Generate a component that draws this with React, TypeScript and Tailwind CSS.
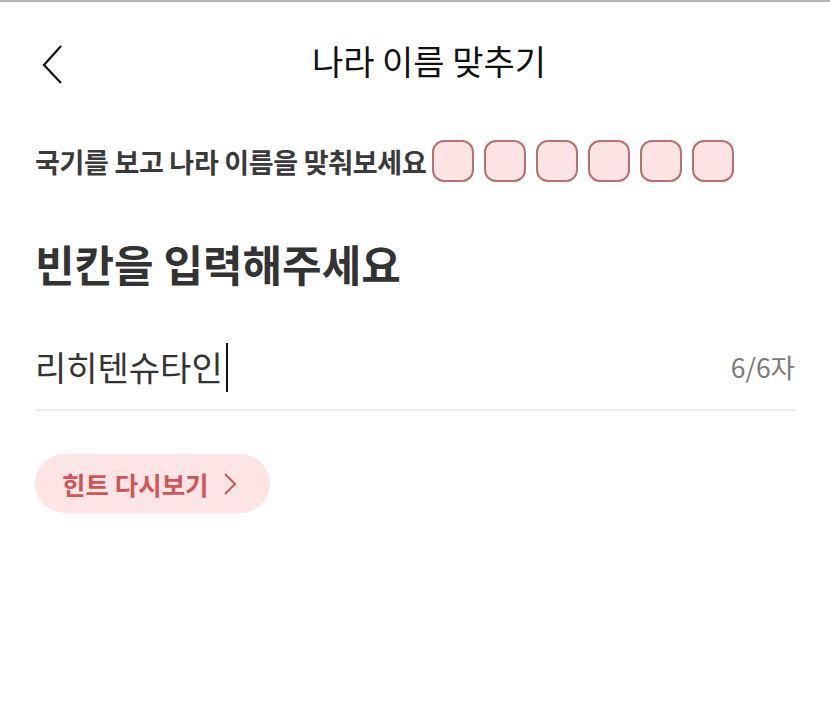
import React from "react";

export default function App() {
  const font = { fontFamily: '"Noto Sans CJK KR", "Noto Sans", sans-serif' };
  return (
    <div className="w-[830px] h-[715px] bg-white border-t-2 border-[#b5b5b5] overflow-hidden" style={font}>
      <div className="relative h-[118px] flex items-center justify-center">
        <svg className="absolute left-[40px] top-[42px]" width="24" height="40" viewBox="0 0 24 40" fill="none">
          <path d="M21 2 L4 21 L21 39" stroke="#111" strokeWidth="2.2" strokeLinejoin="miter" />
        </svg>
        <div className="ml-[28px] text-[34px] text-[#111] leading-none">나라 이름 맞추기</div>
      </div>
      <div className="px-[35px]">
        <div className="flex items-center mt-[19px] h-[44px]">
          <div className="text-[27px] font-bold text-[#3a3a3a] tracking-[-0.3px] leading-none">국기를 보고 나라 이름을 맞춰보세요</div>
          <div className="flex gap-[10px] ml-[6px]">
            {[0, 1, 2, 3, 4, 5].map((i) => (
              <div key={i} className="w-[42px] h-[42px] rounded-[12px] bg-[#fde4e4] border-2 border-[#b87070]" />
            ))}
          </div>
        </div>
        <div className="mt-[59px] text-[43px] font-bold text-[#333] leading-none">빈칸을 입력해주세요</div>
        <div className="mt-[40px] flex items-center justify-between h-[86px] border-b-2 border-[#eeeeee]">
          <div className="flex items-center">
            <span className="text-[34px] text-[#333] leading-none">리히텐슈타인</span>
            <span className="w-[2px] h-[49px] bg-[#111] ml-[3px]" />
          </div>
          <span className="text-[26.5px] text-[#7a7a7a] leading-none">6/6자</span>
        </div>
        <div className="mt-[43px] inline-flex items-center h-[59px] w-[235px] rounded-full bg-[#fde5e5] pl-[27px]">
          <span className="text-[25.5px] font-bold text-[#cf5558] leading-none">힌트 다시보기</span>
          <svg className="ml-[14px]" width="14" height="24" viewBox="0 0 14 24" fill="none">
            <path d="M2 2 L12 12 L2 22" stroke="#cf5558" strokeWidth="2" />
          </svg>
        </div>
      </div>
    </div>
  );
}
